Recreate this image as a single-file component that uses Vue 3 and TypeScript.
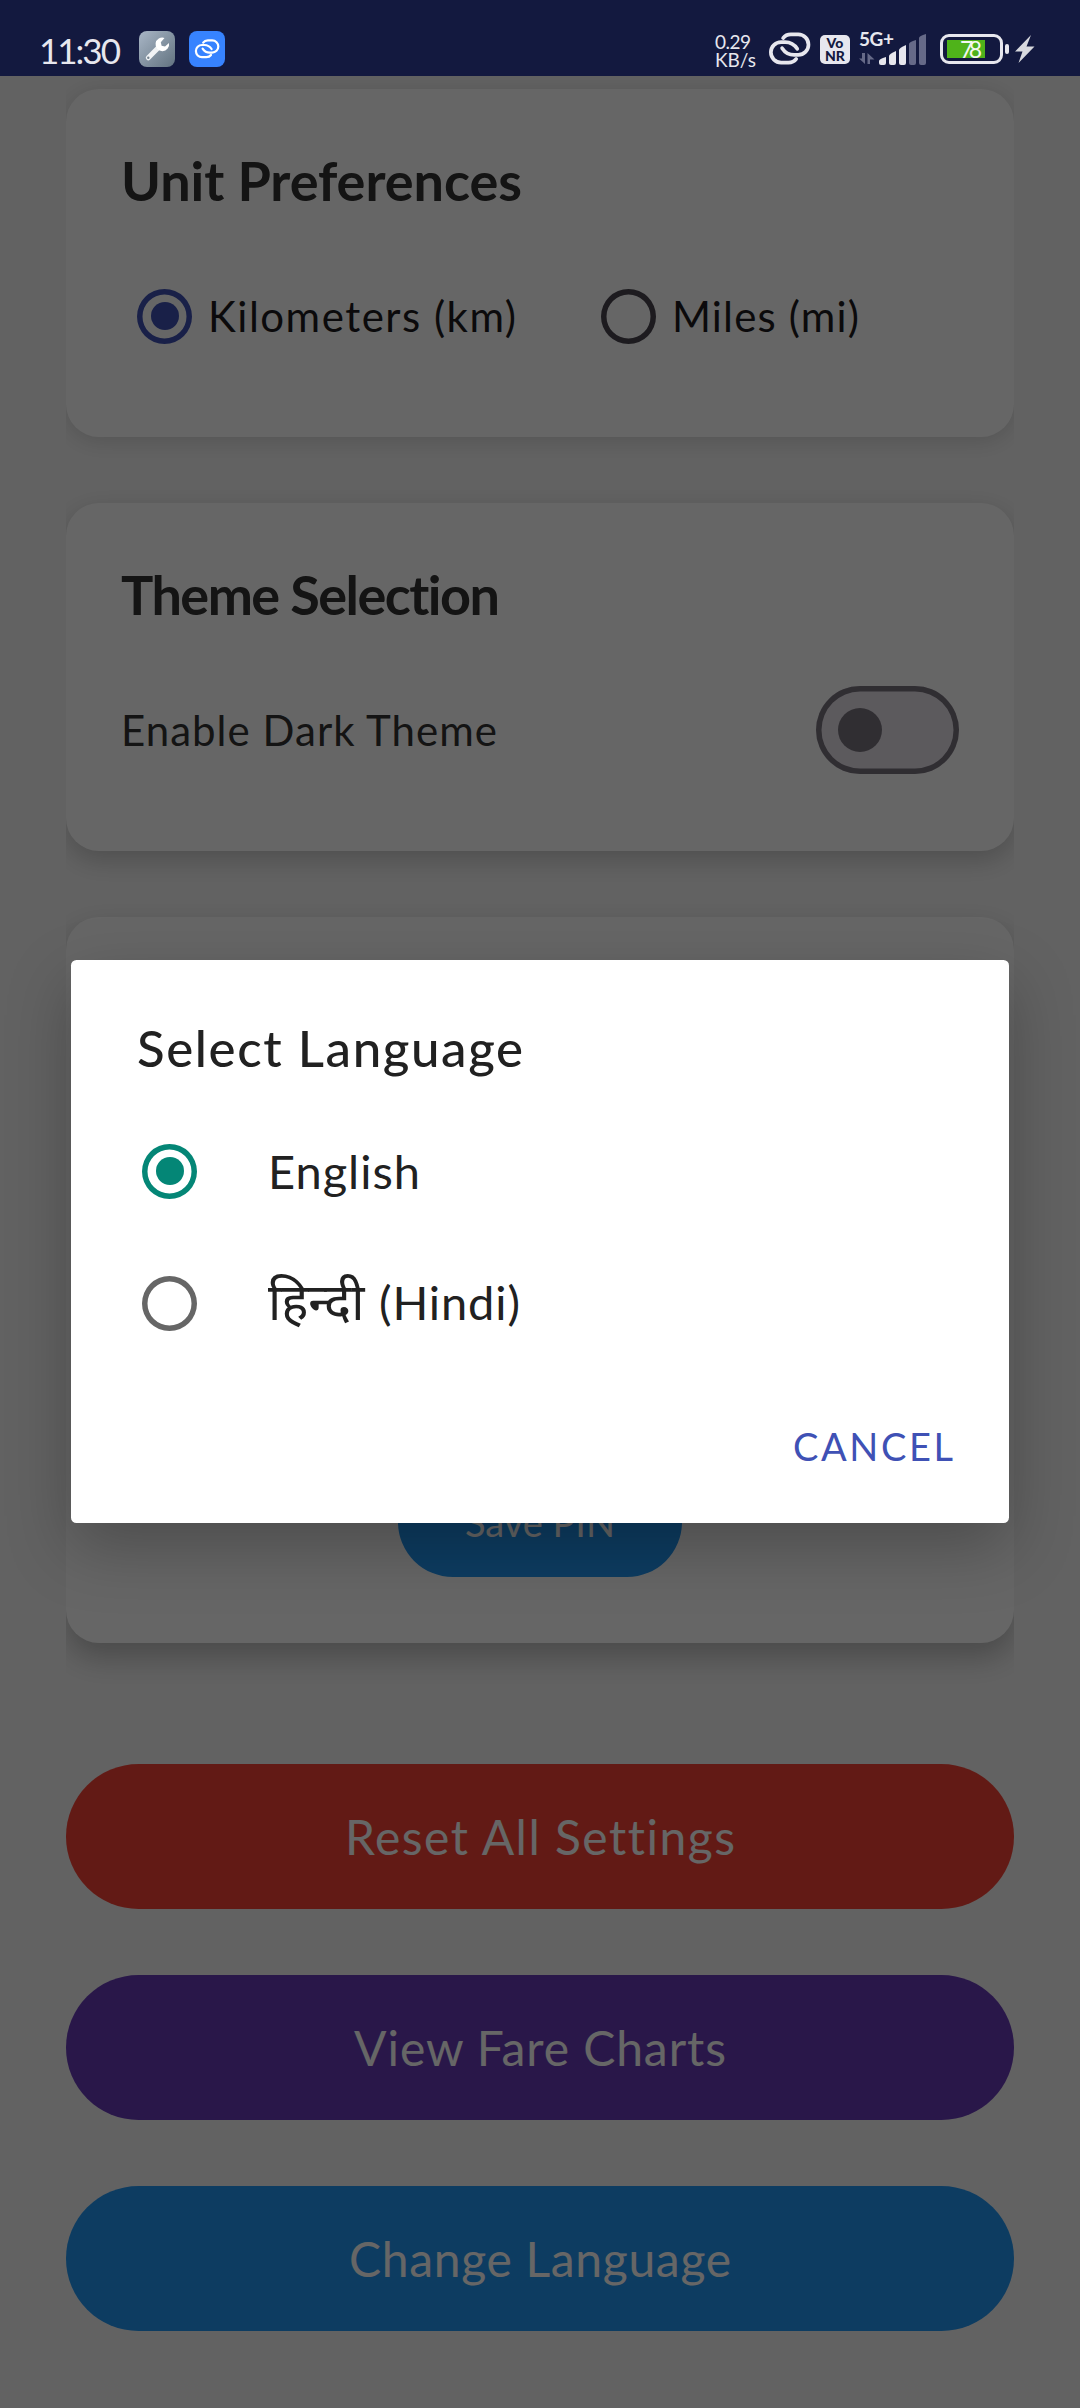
<script setup lang="ts">
import { ref, type Directive } from 'vue'

interface Action {
  label: string
  width: number
  tone: string
}

const unit = ref<'km' | 'mi'>('km')
const darkTheme = ref(false)
const language = ref<'en' | 'hi'>('en')

const actions: Action[] = [
  { label: 'Reset All Settings', width: 390, tone: 'red' },
  { label: 'View Fare Charts', width: 372, tone: 'purple' },
  { label: 'Change Language', width: 382, tone: 'blue' },
]

/* Tracks a label out (or in) so that it fills the given width in pixels. */
const vFit: Directive<HTMLElement, number> = {
  mounted(el, { value }) {
    const count = (el.textContent ?? '').length
    el.style.letterSpacing = '0.001px'
    const natural = el.getBoundingClientRect().width
    const spacing = (value - natural) / (count - 1)
    el.style.letterSpacing = `${spacing}px`
    el.style.marginRight = `${-spacing}px`
  },
}
</script>

<template>
  <div class="screen">
    <div class="status-fill"></div>
    <main class="page">
      <div class="cards">
        <section class="card card-units">
          <h2><span v-fit="401">Unit Preferences</span></h2>
          <div class="row">
            <label class="choice first" @click="unit = 'km'">
              <i class="radio" :class="{ on: unit === 'km' }"></i>
              <span v-fit="308">Kilometers (km)</span>
            </label>
            <label class="choice" @click="unit = 'mi'">
              <i class="radio" :class="{ on: unit === 'mi' }"></i>
              <span v-fit="187">Miles (mi)</span>
            </label>
          </div>
        </section>

        <section class="card card-theme">
          <h2><span v-fit="379">Theme Selection</span></h2>
          <div class="row spread">
            <span v-fit="376" class="muted">Enable Dark Theme</span>
            <button class="switch" :class="{ on: darkTheme }" @click="darkTheme = !darkTheme"><i></i></button>
          </div>
        </section>

        <section class="card card-pin">
          <button class="save"><span v-fit="150">Save PIN</span></button>
        </section>
      </div>

      <div class="actions">
        <button v-for="a in actions" :key="a.label" class="action" :class="a.tone">
          <span v-fit="a.width">{{ a.label }}</span>
        </button>
      </div>
    </main>

    <div class="scrim">
      <div class="dialog">
        <h1><span v-fit="386">Select Language</span></h1>
        <label class="option" @click="language = 'en'">
          <i class="radio" :class="{ on: language === 'en' }"></i>
          <span v-fit="152">English</span>
        </label>
        <label class="option" @click="language = 'hi'">
          <i class="radio" :class="{ on: language === 'hi' }"></i>
          <span class="name">
            <span class="hindi">हिन्दी</span>
            <span v-fit="141">(Hindi)</span>
          </span>
        </label>
        <div class="buttons">
          <button class="cancel"><span v-fit="160">CANCEL</span></button>
        </div>
      </div>
    </div>

    <header class="status">
      <span v-fit="82" class="clock">11:30</span>
      <svg class="app tool" viewBox="0 0 36 36">
        <defs>
          <linearGradient id="steel" x1="0" y1="0" x2="1" y2="1">
            <stop offset="0" stop-color="#a9b6c6" />
            <stop offset="1" stop-color="#627380" />
          </linearGradient>
        </defs>
        <rect width="36" height="36" rx="8" fill="url(#steel)" />
        <path d="M9.300 26.800L19.500 16.500" stroke="#f1f3f5" stroke-width="5" stroke-linecap="round" />
        <path d="M25.500 6.900A6.800 6.800 0 1 0 30 12L26 15.600L22.600 14.800L21.800 11.300Z" fill="#fff" />
        <circle cx="9.300" cy="26.800" r="1.200" fill="#75838f" />
      </svg>
      <svg class="app link-app" viewBox="0 0 36 36">
        <rect width="36" height="36" rx="8" fill="#3783ff" />
        <g transform="translate(5.200 8) scale(.2)" fill="none" stroke="#fff" stroke-width="11" stroke-linecap="round">
          <path d="M45 18Q53 7 68 7H90A30.500 30.500 0 0 1 90 68H78Q55 68 42 48" />
          <path d="M45 18Q53 7 68 7H90A30.500 30.500 0 0 1 90 68H78Q55 68 42 48" transform="rotate(180 64.500 49)" />
        </g>
      </svg>

      <div class="speed">
        <span v-fit="36">0.29</span>
        <span v-fit="41">KB/s</span>
      </div>
      <svg class="link" viewBox="0 0 128 98">
        <g fill="none" stroke="#e7e7ee" stroke-width="11" stroke-linecap="round">
          <path d="M45 18Q53 7 68 7H90A30.500 30.500 0 0 1 90 68H78Q55 68 42 48" />
          <path d="M45 18Q53 7 68 7H90A30.500 30.500 0 0 1 90 68H78Q55 68 42 48" transform="rotate(180 64.500 49)" />
        </g>
      </svg>
      <div class="vonr"><span>Vo</span><span>NR</span></div>
      <div class="signal">
        <span v-fit="35" class="net">5G+</span>
        <svg viewBox="0 0 68 34">
          <g fill="#666a88">
            <path d="M3 22H6V33L0 27.500H3Z M11 33H8.500V22L15.500 28.500H11Z" />
            <path d="M50 13Q50 11 57 9V32Q57 34 55 34H52Q50 34 50 32Z" />
            <path d="M60 7Q60 5 67 3V32Q67 34 65 34H62Q60 34 60 32Z" />
          </g>
          <g fill="#e7e7ee">
            <path d="M20 30Q20 28 27 26V32Q27 34 25 34H22Q20 34 20 32Z" />
            <path d="M30 25Q30 23 37 20V32Q37 34 35 34H32Q30 34 30 32Z" />
            <path d="M40 19Q40 17 47 14V32Q47 34 45 34H42Q40 34 40 32Z" />
          </g>
        </svg>
      </div>
      <div class="battery"><div class="level"><span v-fit="22">78</span></div></div>
      <i class="nub"></i>
      <svg class="bolt" viewBox="0 0 20 28">
        <path d="M16 0L0 16.500H7.500L3.500 28L19.500 11.500H11.500Z" fill="#d8d9de" />
      </svg>
    </header>
  </div>
</template>

<style>
body {
  margin: 0;
}
</style>

<style scoped>
* {
  box-sizing: border-box;
}

.screen {
  position: relative;
  width: 1080px;
  height: 2408px;
  overflow: hidden;
  background: #f5f5f5;
  font-family: Lato, "Noto Sans", sans-serif;
  white-space: nowrap;
}

button {
  border: 0;
  padding: 0;
  font-family: inherit;
}

h1,
h2 {
  margin: 0;
}

.status-fill {
  height: 76px;
  background: #303f9f;
}

.page {
  padding: 13px 66px 0;
}

/* Shadows only spill above and below the list, never past its sides. */
.cards {
  display: flex;
  flex-direction: column;
  gap: 66px;
  clip-path: inset(-13px 0 -80px 0);
}

.card {
  height: 348px;
  padding: 60px 55px 0;
  border-radius: 33px;
  background: #fff;
}

.card-units {
  box-shadow: 0 4px 22px rgba(0, 0, 0, 0.14);
}

.card-theme {
  box-shadow: 0 9px 26px rgba(0, 0, 0, 0.2);
}

.card-pin {
  display: flex;
  justify-content: center;
  align-items: flex-end;
  height: 726px;
  padding-bottom: 66px;
  box-shadow: 0 14px 30px rgba(0, 0, 0, 0.25);
}

h2 {
  height: 64px;
  font-size: 54px;
  line-height: 64px;
  font-weight: 700;
  color: #333;
}

.row {
  display: flex;
  align-items: center;
  height: 88px;
  margin-top: 59px;
  font-size: 42px;
  line-height: 50px;
  color: #1d1b20;
}

.spread {
  justify-content: space-between;
}

.muted {
  color: #333;
}

.choice {
  display: flex;
  align-items: center;
  gap: 16px;
  margin-left: 16px;
}

.choice.first {
  width: 448px;
}

.radio {
  display: flex;
  flex: none;
  align-items: center;
  justify-content: center;
  width: 55px;
  height: 55px;
  border-radius: 50%;
  color: #49454f;
  box-shadow: inset 0 0 0 5.500px currentColor;
}

.radio.on {
  color: #3f51b5;
}

.radio.on::after {
  content: "";
  width: 28px;
  height: 28px;
  border-radius: 50%;
  background: currentColor;
}

.switch {
  display: flex;
  align-items: center;
  width: 143px;
  height: 88px;
  padding-left: 22px;
  border-radius: 44px;
  background: #e6e0e9;
  box-shadow: inset 0 0 0 5.500px #79747e;
}

.switch i {
  width: 44px;
  height: 44px;
  border-radius: 50%;
  background: #79747e;
}

.save {
  width: 284px;
  height: 110px;
  border-radius: 55px;
  background: #2196f3;
  color: #fff;
  font-size: 38px;
}

.actions {
  display: flex;
  flex-direction: column;
  gap: 66px;
  margin-top: 121px;
}

.action {
  height: 145px;
  border-radius: 73px;
  color: #fff;
  font-size: 48px;
  line-height: 58px;
}

.red {
  background: #f44336;
}

.purple {
  background: #673ab7;
}

.blue {
  background: #2196f3;
}

.scrim {
  position: absolute;
  inset: 0;
  display: flex;
  align-items: flex-start;
  justify-content: center;
  padding-top: 960px;
  background: rgba(0, 0, 0, 0.6);
}

.dialog {
  width: 938px;
  height: 563px;
  padding-top: 56px;
  border-radius: 5.500px;
  background: #fff;
  color: #212121;
  box-shadow: 0 24px 64px rgba(0, 0, 0, 0.25);
}

h1 {
  height: 64px;
  margin: 0 0 25px 66px;
  font-size: 51px;
  line-height: 64px;
  font-weight: 500;
}

.option {
  display: flex;
  align-items: center;
  height: 132px;
  padding-left: 71px;
  font-size: 47px;
  line-height: 56px;
}

.option .radio {
  margin-right: 71px;
  color: #666;
}

.option .radio.on {
  color: #048676;
}

.name {
  display: flex;
  align-items: baseline;
  padding-bottom: 4px;
}

.hindi {
  width: 111px;
  font-size: 51px;
}

.buttons {
  display: flex;
  justify-content: flex-end;
  padding: 52px 56px 0 0;
}

.cancel {
  height: 50px;
  background: none;
  color: #3f51b5;
  font-size: 38px;
  line-height: 50px;
}

.status {
  position: absolute;
  top: 0;
  left: 0;
  display: flex;
  align-items: flex-start;
  width: 1080px;
  height: 76px;
  padding-left: 39px;
  color: #e7e7ee;
}

.clock {
  padding-top: 28px;
  font-size: 35px;
  line-height: 44px;
}

.app {
  width: 36px;
  height: 36px;
  margin-top: 31px;
}

.tool {
  margin-left: 18px;
}

.link-app {
  margin-left: 14px;
}

.speed {
  display: flex;
  flex-direction: column;
  align-items: flex-start;
  width: 53px;
  margin: 33px 0 0 490px;
  font-size: 19px;
  line-height: 18px;
}

.link {
  width: 43px;
  height: 33px;
  margin-top: 32px;
}

.vonr {
  display: flex;
  flex-direction: column;
  align-items: center;
  width: 30px;
  height: 29px;
  margin: 35px 0 0 9px;
  padding-top: 2px;
  border-radius: 5px;
  background: #e7e7ee;
  color: #131940;
  font-size: 14px;
  font-weight: 900;
  line-height: 12.500px;
}

.signal {
  position: relative;
  width: 68px;
  margin: 31px 0 0 9px;
}

.signal svg {
  display: block;
  width: 68px;
  height: 34px;
}

.net {
  position: absolute;
  top: -3px;
  left: 0;
  font-size: 19px;
  line-height: 22px;
  font-weight: 700;
}

.battery {
  width: 63px;
  height: 30px;
  margin: 34px 0 0 13px;
  padding: 3px 4px;
  border: 3px solid #e7e7ee;
  border-radius: 9px;
}

.level {
  display: flex;
  justify-content: flex-end;
  width: 38px;
  height: 18px;
  padding-right: 3px;
  background: #4fb31a;
  color: #f4f8f0;
  font-size: 23px;
  line-height: 19px;
}

.nub {
  width: 4px;
  height: 10px;
  margin: 44px 0 0 2px;
  border-radius: 2px;
  background: #e7e7ee;
}

.bolt {
  width: 20px;
  height: 28px;
  margin: 35px 0 0 6px;
}
</style>
